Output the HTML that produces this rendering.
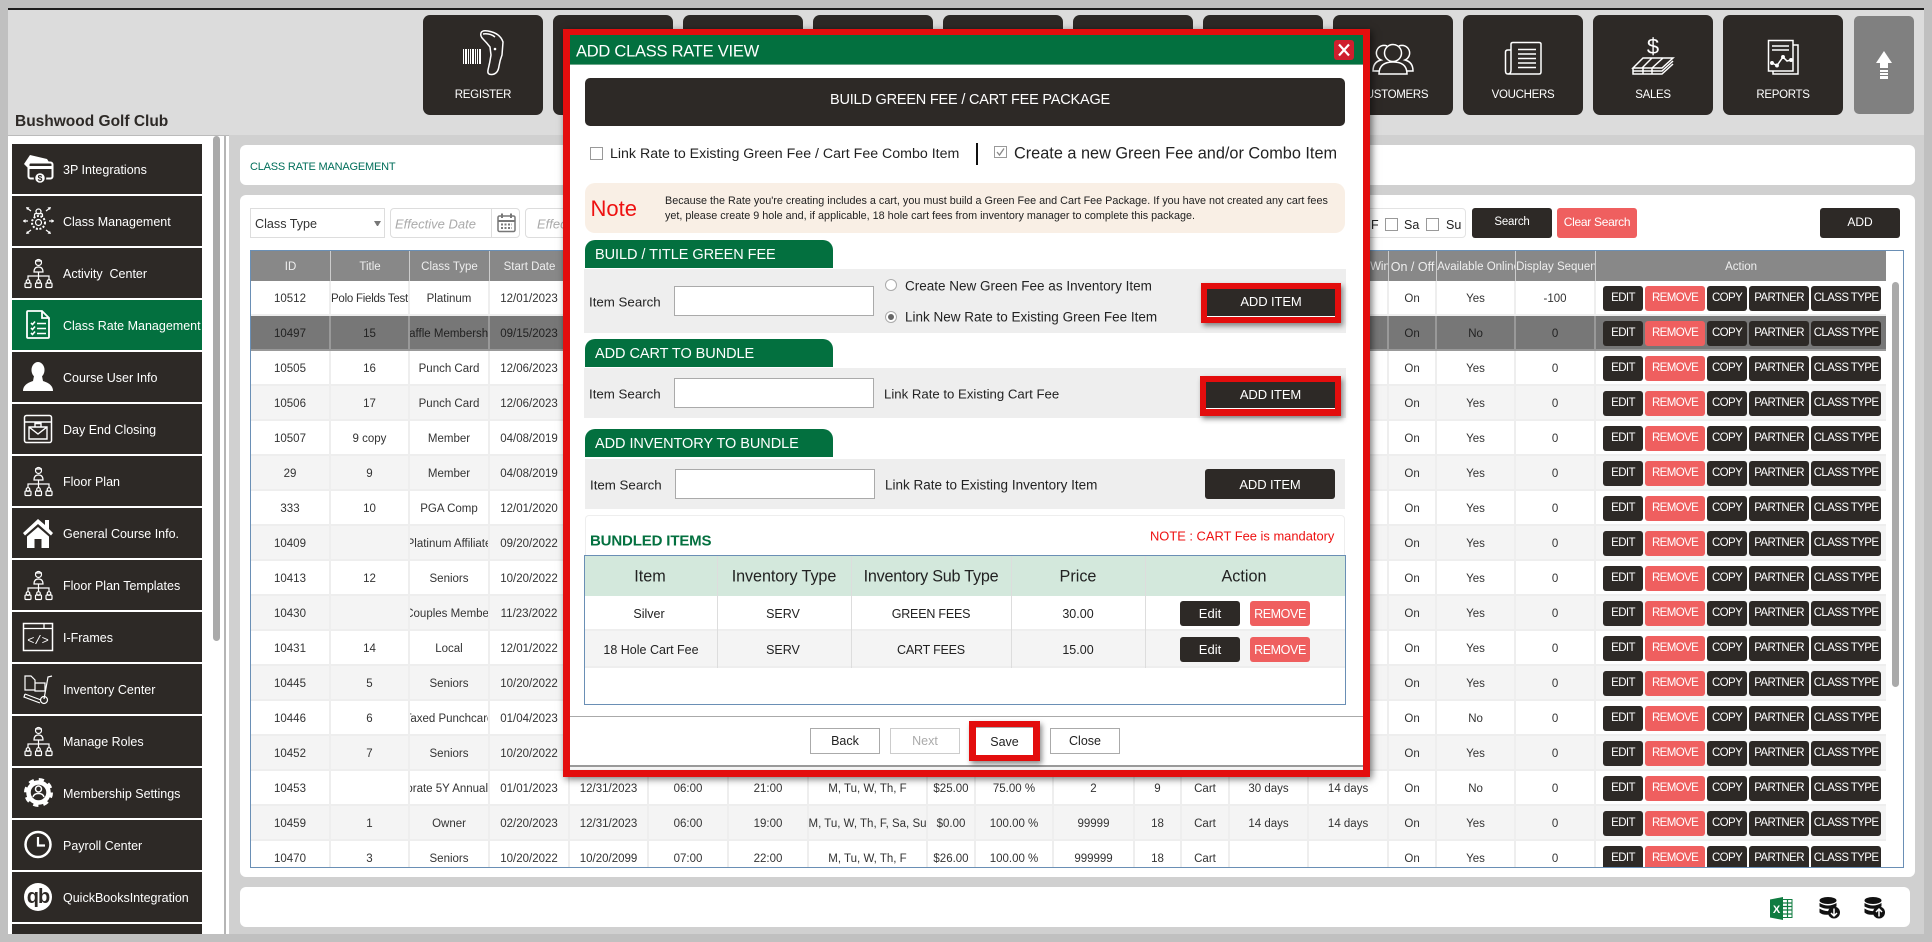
<!DOCTYPE html>
<html><head><meta charset="utf-8"><title>Add Class Rate View</title>
<style>
html,body{margin:0;padding:0}
body{width:1932px;height:942px;position:relative;overflow:hidden;background:#c0c0c0;font-family:"Liberation Sans",sans-serif;color:#222}
.a{position:absolute;box-sizing:border-box}
.t{position:absolute;white-space:nowrap;transform:translateY(-50%)}
.c{position:absolute;white-space:nowrap;transform:translate(-50%,-50%)}
.f{position:absolute;box-sizing:border-box;display:flex;align-items:center;justify-content:center;white-space:nowrap}
.nav{width:120px;height:100px;top:15px;background:#2d2926;border-radius:7px;color:#fff;font-size:11.5px;letter-spacing:-.3px;padding-top:60px}
.sb{left:12px;width:190px;height:50px;background:#2d2926}
.sb span{position:absolute;left:51px;top:51%;transform:translateY(-50%);color:#fff;font-size:12.5px;white-space:nowrap}
.btn{background:#2d2926;color:#fff;border-radius:3px;font-size:12px}
.red{background:#ef5f5f;color:#fff;border-radius:3px}
table{border-collapse:separate;border-spacing:0;table-layout:fixed;width:1635px;font-size:11.5px;color:#333}
th{background:#888;color:#eee;font-weight:normal;height:30px;padding:2px 0 0;border-right:1px solid #ccc;box-sizing:border-box;overflow:hidden;white-space:nowrap;font-size:11.5px}
td{height:35px;padding:2px 0 0;text-align:center;overflow:hidden;white-space:nowrap;border-right:2px solid #eee;border-bottom:2px solid #eee;box-sizing:border-box}
tr:nth-child(even) td{background:#f4f4f4}
tr.h td{background:#777!important;border-color:#999;color:#222}
td.x div{display:flex;justify-content:center;overflow:hidden}
td.x div span{flex:none}
td.e div{justify-content:flex-end}
.ac{display:flex;gap:2px;padding-left:7px}
.ac b{display:block;height:25px;line-height:25px;background:#2d2926;color:#fff;border-radius:3px;font-weight:normal;font-size:11.5px;letter-spacing:-.6px;text-align:center}
.ac b:nth-child(1),.ac b:nth-child(3){width:40px}
.ac b:nth-child(2){width:60px;background:#ef5f5f}
.ac b:nth-child(4){width:60px}
.ac b:nth-child(5){width:70px}
td.l{border-right:0;text-align:left}
.sec{left:585px;width:248px;height:28px;background:#03703f;border-radius:10px 10px 0 0;color:#fff;font-size:14.5px;letter-spacing:-.05px;padding:2px 0 0 10px;display:flex;align-items:center}
.inp{background:#fff;border:1px solid #aaa;height:30px}
.lab{font-size:13.3px;color:#222}
.ft{background:#fff;border:1px solid #aaa;font-size:12.5px;color:#222;height:26px}
.chk{position:absolute;box-sizing:border-box;background:#fff;border:1px solid #999}
</style></head><body>

<div class="a" style="left:8px;top:8px;width:1916px;height:2px;background:#1e1e1e"></div>
<div class="a" style="left:8px;top:10px;width:1916px;height:125px;background:#dcdcdc"></div>
<div class="a" style="left:8px;top:135px;width:1916px;height:799px;background:#d0d0d0"></div>
<div class="a" style="left:8px;top:135px;width:221px;height:799px;background:#fff;border-top:1px solid #bbb"></div>
<div class="a" style="left:224px;top:136px;width:2px;height:798px;background:#b5b5b5"></div>
<div class="a" style="left:213px;top:136px;width:7px;height:505px;background:#aaa;border-radius:4px"></div>

<div class="t" style="left:15px;top:121.5px;font-size:15.5px;font-weight:bold;color:#2d2926">Bushwood Golf Club</div>

<div class="f nav" style="left:423px">REGISTER</div>
<div class="f nav" style="left:553px"></div>
<div class="f nav" style="left:683px"></div>
<div class="f nav" style="left:813px"></div>
<div class="f nav" style="left:943px"></div>
<div class="f nav" style="left:1073px"></div>
<div class="f nav" style="left:1203px"></div>
<div class="f nav" style="left:1333px">CUSTOMERS</div>
<div class="f nav" style="left:1463px">VOUCHERS</div>
<div class="f nav" style="left:1593px">SALES</div>
<div class="f nav" style="left:1723px">REPORTS</div>
<div class="a" style="left:1854px;top:16px;width:60px;height:98px;background:#808080;border-radius:5px"></div>

<!-- sidebar -->
<div class="a sb" style="top:144px"><span>3P Integrations</span></div>
<div class="a sb" style="top:196px"><span>Class Management</span></div>
<div class="a sb" style="top:248px"><span>Activity&nbsp; Center</span></div>
<div class="a sb" style="top:300px;background:#03703f"><span>Class Rate Management</span></div>
<div class="a sb" style="top:352px"><span>Course User Info</span></div>
<div class="a sb" style="top:404px"><span>Day End Closing</span></div>
<div class="a sb" style="top:456px"><span>Floor Plan</span></div>
<div class="a sb" style="top:508px"><span>General Course Info.</span></div>
<div class="a sb" style="top:560px"><span>Floor Plan Templates</span></div>
<div class="a sb" style="top:612px"><span>I-Frames</span></div>
<div class="a sb" style="top:664px"><span>Inventory Center</span></div>
<div class="a sb" style="top:716px"><span>Manage Roles</span></div>
<div class="a sb" style="top:768px"><span>Membership Settings</span></div>
<div class="a sb" style="top:820px"><span>Payroll Center</span></div>
<div class="a sb" style="top:872px"><span>QuickBooksIntegration</span></div>
<div class="a sb" style="top:924px;height:10px"></div>

<!-- cards -->
<div class="a" style="left:240px;top:145px;width:1675px;height:40px;background:#fff;border-radius:6px"></div>
<div class="t" style="left:250px;top:166.5px;font-size:11px;color:#006e5a;letter-spacing:-.2px">CLASS RATE MANAGEMENT</div>
<div class="a" style="left:240px;top:195px;width:1675px;height:682px;background:#fff;border-radius:6px"></div>
<div class="a" style="left:240px;top:887px;width:1670px;height:40px;background:#fff;border-radius:6px"></div>

<!-- filters -->
<div class="a" style="left:250px;top:208px;width:135px;height:30px;border:1px solid #ddd;background:#fff"></div>
<div class="t" style="left:255px;top:223.5px;font-size:12.6px;color:#333">Class Type</div>
<div class="a" style="left:374px;top:221px;border:3.5px solid transparent;border-top:5px solid #777;border-bottom:0;width:7px;height:5px"></div>
<div class="a" style="left:390px;top:208px;width:130px;height:30px;border:1px solid #ddd;border-radius:4px;background:#fff"></div>
<div class="a" style="left:491px;top:208px;width:1px;height:30px;background:#ddd"></div>
<div class="t" style="left:395px;top:223.5px;font-size:13px;font-style:italic;color:#aaa">Effective Date</div>
<div class="a" style="left:525px;top:208px;width:60px;height:30px;border:1px solid #ddd;border-radius:4px;background:#fff"></div>
<div class="t" style="left:537px;top:223.5px;font-size:13px;font-style:italic;color:#aaa">Effec</div>
<div class="a" style="left:1300px;top:208px;width:166px;height:30px;border:1px solid #e3e3e3;border-radius:4px;background:#fff"></div>
<div class="t" style="left:1371px;top:225px;font-size:12.5px">F</div>
<div class="chk" style="left:1385px;top:218px;width:13px;height:13px"></div>
<div class="t" style="left:1404px;top:225px;font-size:12.5px">Sa</div>
<div class="chk" style="left:1426px;top:218px;width:13px;height:13px"></div>
<div class="t" style="left:1446px;top:225px;font-size:12.5px">Su</div>
<div class="f btn" style="left:1472px;top:208px;width:80px;height:30px;padding-bottom:3px;font-size:11.5px;letter-spacing:-.2px">Search</div>
<div class="f red" style="left:1557px;top:208px;width:80px;height:30px;font-size:12px;letter-spacing:-.3px;padding-bottom:3px">Clear Search</div>
<div class="f btn" style="left:1820px;top:208px;width:80px;height:30px;padding-bottom:3px">ADD</div>

<!-- data table -->
<div class="a" style="left:250px;top:250px;width:1654px;height:618px;border:1px solid #6a8fb5;background:#fff;overflow:hidden">
<table>
<colgroup><col style="width:80px"><col style="width:79px"><col style="width:80px"><col style="width:80px"><col style="width:79px"><col style="width:80px"><col style="width:80px"><col style="width:119px"><col style="width:48px"><col style="width:78px"><col style="width:81px"><col style="width:47px"><col style="width:48px"><col style="width:79px"><col style="width:80px"><col style="width:48px"><col style="width:79px"><col style="width:80px"><col style="width:290px"></colgroup>
<thead><tr><th>ID</th><th>Title</th><th>Class Type</th><th>Start Date</th><th colspan="10"></th><th style="text-align:left;padding-left:61px">Win</th><th style="font-size:12.5px">On / Off</th><th style="text-align:left">Available Online</th><th style="text-align:left">Display Sequence</th><th style="border-right:0">Action</th></tr></thead>
<tbody>
<tr><td><span>10512</span></td><td style="letter-spacing:-.25px">Polo Fields Test</td><td>Platinum</td><td>12/01/2023</td><td colspan="10"></td><td>14 days</td><td>On</td><td>Yes</td><td>-100</td><td class="l"><div class="ac"><b>EDIT</b><b>REMOVE</b><b>COPY</b><b>PARTNER</b><b>CLASS TYPE</b></div></td></tr>
<tr class="h"><td>10497</td><td>15</td><td class="x"><div><span>Raffle Membership</span></div></td><td>09/15/2023</td><td colspan="11"></td><td>On</td><td>No</td><td>0</td><td class="l"><div class="ac"><b>EDIT</b><b>REMOVE</b><b>COPY</b><b>PARTNER</b><b>CLASS TYPE</b></div></td></tr>
<tr><td>10505</td><td>16</td><td>Punch Card</td><td>12/06/2023</td><td colspan="11"></td><td>On</td><td>Yes</td><td>0</td><td class="l"><div class="ac"><b>EDIT</b><b>REMOVE</b><b>COPY</b><b>PARTNER</b><b>CLASS TYPE</b></div></td></tr>
<tr><td>10506</td><td>17</td><td>Punch Card</td><td>12/06/2023</td><td colspan="11"></td><td>On</td><td>Yes</td><td>0</td><td class="l"><div class="ac"><b>EDIT</b><b>REMOVE</b><b>COPY</b><b>PARTNER</b><b>CLASS TYPE</b></div></td></tr>
<tr><td>10507</td><td>9 copy</td><td>Member</td><td>04/08/2019</td><td colspan="11"></td><td>On</td><td>Yes</td><td>0</td><td class="l"><div class="ac"><b>EDIT</b><b>REMOVE</b><b>COPY</b><b>PARTNER</b><b>CLASS TYPE</b></div></td></tr>
<tr><td>29</td><td>9</td><td>Member</td><td>04/08/2019</td><td colspan="11"></td><td>On</td><td>Yes</td><td>0</td><td class="l"><div class="ac"><b>EDIT</b><b>REMOVE</b><b>COPY</b><b>PARTNER</b><b>CLASS TYPE</b></div></td></tr>
<tr><td>333</td><td>10</td><td>PGA Comp</td><td>12/01/2020</td><td colspan="11"></td><td>On</td><td>Yes</td><td>0</td><td class="l"><div class="ac"><b>EDIT</b><b>REMOVE</b><b>COPY</b><b>PARTNER</b><b>CLASS TYPE</b></div></td></tr>
<tr><td>10409</td><td></td><td class="x"><div><span>Platinum Affiliate</span></div></td><td>09/20/2022</td><td colspan="11"></td><td>On</td><td>Yes</td><td>0</td><td class="l"><div class="ac"><b>EDIT</b><b>REMOVE</b><b>COPY</b><b>PARTNER</b><b>CLASS TYPE</b></div></td></tr>
<tr><td>10413</td><td>12</td><td>Seniors</td><td>10/20/2022</td><td colspan="11"></td><td>On</td><td>Yes</td><td>0</td><td class="l"><div class="ac"><b>EDIT</b><b>REMOVE</b><b>COPY</b><b>PARTNER</b><b>CLASS TYPE</b></div></td></tr>
<tr><td>10430</td><td></td><td class="x"><div><span>Couples Member</span></div></td><td>11/23/2022</td><td colspan="11"></td><td>On</td><td>Yes</td><td>0</td><td class="l"><div class="ac"><b>EDIT</b><b>REMOVE</b><b>COPY</b><b>PARTNER</b><b>CLASS TYPE</b></div></td></tr>
<tr><td>10431</td><td>14</td><td>Local</td><td>12/01/2022</td><td colspan="11"></td><td>On</td><td>Yes</td><td>0</td><td class="l"><div class="ac"><b>EDIT</b><b>REMOVE</b><b>COPY</b><b>PARTNER</b><b>CLASS TYPE</b></div></td></tr>
<tr><td>10445</td><td>5</td><td>Seniors</td><td>10/20/2022</td><td colspan="11"></td><td>On</td><td>Yes</td><td>0</td><td class="l"><div class="ac"><b>EDIT</b><b>REMOVE</b><b>COPY</b><b>PARTNER</b><b>CLASS TYPE</b></div></td></tr>
<tr><td>10446</td><td>6</td><td class="x"><div><span>Taxed Punchcard</span></div></td><td>01/04/2023</td><td colspan="11"></td><td>On</td><td>No</td><td>0</td><td class="l"><div class="ac"><b>EDIT</b><b>REMOVE</b><b>COPY</b><b>PARTNER</b><b>CLASS TYPE</b></div></td></tr>
<tr><td>10452</td><td>7</td><td>Seniors</td><td>10/20/2022</td><td colspan="11"></td><td>On</td><td>Yes</td><td>0</td><td class="l"><div class="ac"><b>EDIT</b><b>REMOVE</b><b>COPY</b><b>PARTNER</b><b>CLASS TYPE</b></div></td></tr>
<tr><td>10453</td><td></td><td class="x e"><div><span>Corporate 5Y Annual</span></div></td><td>01/01/2023</td><td>12/31/2023</td><td>06:00</td><td>21:00</td><td>M, Tu, W, Th, F</td><td>$25.00</td><td>75.00 %</td><td>2</td><td>9</td><td>Cart</td><td>30 days</td><td>14 days</td><td>On</td><td>No</td><td>0</td><td class="l"><div class="ac"><b>EDIT</b><b>REMOVE</b><b>COPY</b><b>PARTNER</b><b>CLASS TYPE</b></div></td></tr>
<tr><td>10459</td><td>1</td><td>Owner</td><td>02/20/2023</td><td>12/31/2023</td><td>06:00</td><td>19:00</td><td class="x"><div><span>M, Tu, W, Th, F, Sa, Su</span></div></td><td>$0.00</td><td>100.00 %</td><td>99999</td><td>18</td><td>Cart</td><td>14 days</td><td>14 days</td><td>On</td><td>Yes</td><td>0</td><td class="l"><div class="ac"><b>EDIT</b><b>REMOVE</b><b>COPY</b><b>PARTNER</b><b>CLASS TYPE</b></div></td></tr>
<tr><td>10470</td><td>3</td><td>Seniors</td><td>10/20/2022</td><td>10/20/2099</td><td>07:00</td><td>22:00</td><td>M, Tu, W, Th, F</td><td>$26.00</td><td>100.00 %</td><td>999999</td><td>18</td><td>Cart</td><td></td><td></td><td>On</td><td>Yes</td><td>0</td><td class="l"><div class="ac"><b>EDIT</b><b>REMOVE</b><b>COPY</b><b>PARTNER</b><b>CLASS TYPE</b></div></td></tr>
</tbody></table>
</div>
<div class="a" style="left:1892px;top:282px;width:7px;height:405px;background:#aaa;border-radius:4px"></div>

<!-- icon layer -->
<svg class="a" style="left:0;top:0" width="1932" height="942" viewBox="0 0 1932 942" fill="none" stroke="#fff" stroke-width="1.5">
<defs>
<g id="org" stroke-width="1.2">
<circle cx="19.5" cy="9.5" r="3"/><path d="M16 8h7M15 19q0-5 4.500-5t4.500 5zM19.500 19v8M9 27v-4h21v4"/>
<circle cx="9" cy="28.500" r="1.800"/><rect x="6" y="30" width="6" height="4.500" rx="1"/>
<circle cx="19.500" cy="28.500" r="1.800"/><rect x="16.500" y="30" width="6" height="4.500" rx="1"/>
<circle cx="30" cy="28.500" r="1.800"/><rect x="27" y="30" width="6" height="4.500" rx="1"/>
</g>
</defs>
<!-- scanner -->
<path d="M463 56.500H481" stroke-width="15" stroke-dasharray="1 1 2 1 1 1 1 1 2 1 1 1 1 1 2 2"/>
<path d="M481 33Q482 30 488 31Q500 33 503 42L502 55Q500 60 499 66Q498 74 492 74.500Q487 75 488 70Q490 62 491 55L490 47Q487 43 483 39Q480 36 481 33ZM483 34Q490 33 495 37"/>
<circle cx="495" cy="49" r="1.300" fill="#fff" stroke="none"/>
<!-- customers -->
<circle cx="1393" cy="53" r="8.500"/><path d="M1379 74Q1379 62 1393 62Q1407 62 1407 74Z"/><path d="M1387 46A7.500 7.500 0 1 0 1381 60Q1373 62 1373 71H1379M1399 46A7.500 7.500 0 1 1 1405 60Q1413 62 1413 71H1407"/>
<!-- vouchers -->
<path d="M1511 70V44Q1511 42.500 1513 42.500H1539Q1541 42.500 1541 44V72Q1541 74 1539 74H1508Q1505.500 74 1505.500 71V52Q1505.500 50 1508 50H1511M1508 74Q1511 74 1511 70"/>
<path d="M1518 49.500H1536M1518 54H1536M1518 58.500H1536M1518 63H1536M1518 67.500H1536"/>
<!-- sales -->
<text x="1653" y="54" font-size="22" fill="#fff" stroke="none" text-anchor="middle" font-family="Liberation Sans">$</text>
<path d="M1643 58H1673L1662 68H1633ZM1652 58L1642 68M1663 58L1652 68M1633 68V74H1662L1673 64M1633 71H1662L1673 61M1643 68V74M1652 68V74M1662 68L1673 58"/>
<!-- reports -->
<path d="M1768.500 40.500H1793V71H1768.500ZM1793 45H1798V74H1773V71M1772 46H1789M1772 50H1789"/>
<path d="M1772 63L1777 65.500L1783 57L1787 61L1791 60"/>
<circle cx="1772" cy="63" r="1.200" fill="#fff"/><circle cx="1777" cy="65.500" r="1.200" fill="#fff"/><circle cx="1783" cy="57" r="1.200" fill="#fff"/><circle cx="1791" cy="60" r="1.200" fill="#fff"/>
<!-- up arrow -->
<path d="M1884 51L1892 63H1888V68H1880V63H1876Z" fill="#fff" stroke="none"/>
<path d="M1880 70H1888V72H1880ZM1880 73H1888V75H1880ZM1880 76H1888V79H1880Z" fill="#fff" stroke="none"/>

<!-- calendar -->
<g stroke="#777"><rect x="498" y="216" width="17" height="15.500" rx="1.500" stroke-width="1.500"/><path d="M498 221H515" stroke-width="2"/><path d="M502 213.500V218M511 213.500V218" stroke-width="2"/><path d="M501 224.500H512M501 228H512" stroke-width="2" stroke-dasharray="2 1.500"/></g>

<!-- 3P -->
<g transform="translate(19,149)">
<path d="M5 15L11 6L28 10L30 13H10V20Z" fill="#fff" stroke="none"/>
<rect x="9.500" y="13.500" width="24" height="16" rx="2" stroke-width="2"/><path d="M9.500 18.500H33.500" stroke-width="3"/>
<circle cx="21" cy="29" r="5.500" fill="#fff" stroke="#2d2926"/><text x="21" y="32" font-size="8.500" font-weight="bold" fill="#2d2926" stroke="none" text-anchor="middle" font-family="Liberation Sans">$</text>
</g>
<!-- class mgmt -->
<g transform="translate(19,201)" stroke-width="1.200">
<circle cx="19.500" cy="10.500" r="2.500"/><path d="M15.500 16v-2q0-1.500 1.500-1.500h5q1.500 0 1.500 1.500v2"/>
<circle cx="19.500" cy="21.500" r="3"/><circle cx="19.500" cy="21.500" r="6.500" stroke-width="2" stroke-dasharray="2 1.600"/>
<path d="M4 20H9M30 20H35M8 7L12 10M31 7L27 10M8 32L12 29M31 32L27 29"/>
<path d="M4 20l2.500-2v4zM35 20l-2.500-2v4zM7 6l3.500.5-2.500 2.500zM32 6l-3.500.5 2.500 2.500zM7 33l3.500-.5-2.500-2.500zM32 33l-3.500-.5 2.500-2.500z" fill="#fff" stroke="none"/>
</g>
<use href="#org" transform="translate(19,253)"/>
<!-- class rate -->
<g transform="translate(19,305)">
<path d="M9 6H23L30 13V32Q30 33 29 33H9Q8 33 8 32V7Q8 6 9 6ZM23 6V13H30" stroke-width="1.800"/>
<path d="M12 18l1.500 1.500 2.500-3M12 23l1.500 1.500 2.500-3M12 28l1.500 1.500 2.500-3M18 18.500H27M18 23.500H27M18 28.500H27" stroke-width="1.600"/>
</g>
<!-- user -->
<g transform="translate(19,357)" fill="#fff" stroke="none">
<ellipse cx="19" cy="13" rx="6.500" ry="8"/><path d="M15 19H23L24 24Q34 27 34 34H4Q4 27 14 24Z"/>
</g>
<!-- day end -->
<g transform="translate(19,409)">
<rect x="5.500" y="6.500" width="27" height="27" rx="2"/><path d="M5.500 13H32.500M10 18H28V30H10ZM16 18V14.500H22V18M10 18L19 25L28 18" stroke-width="1.400"/>
</g>
<use href="#org" transform="translate(19,461)"/>
<!-- house -->
<g transform="translate(19,513)" fill="#fff" stroke="none">
<path d="M19 6L26 12V7H30V16L34 20L32 22.500L19 11L6 22.500L4 20Z"/><path d="M19 14L30 23.500V35H22.500V26H15.500V35H8V23.500Z"/>
</g>
<use href="#org" transform="translate(19,565)"/>
<!-- iframes -->
<g transform="translate(19,617)">
<rect x="4.500" y="6.500" width="29" height="27"/><path d="M4.500 11.500H33.500M25 6.500V11.500" stroke-width="1.300"/>
<text x="19" y="27" font-size="12" fill="#fff" stroke="none" text-anchor="middle" font-family="Liberation Mono">&lt;/&gt;</text>
</g>
<!-- inventory -->
<g transform="translate(19,669)" stroke-width="1.200">
<path d="M6 7H12L16 11V21H6ZM16 14H26V22H16ZM33 7L29 8L25 30M6 25L22 31M6 25L5 28L21 34"/>
<circle cx="25" cy="31" r="3.500"/>
</g>
<use href="#org" transform="translate(19,721)"/>
<!-- gear -->
<g transform="translate(19,773)">
<circle cx="19.500" cy="19.500" r="10" stroke-width="4.500"/><circle cx="19.500" cy="19.500" r="12.500" stroke-width="4" stroke-dasharray="5 4.800"/>
<circle cx="19.500" cy="16" r="3" stroke-width="1.500"/><path d="M14 24Q15 20.500 19.500 20.500T25 24" stroke-width="1.500"/>
</g>
<!-- clock -->
<g transform="translate(19,825)"><circle cx="19" cy="19.500" r="12.500" stroke-width="2.500"/><path d="M19 12V20.500H26" stroke-width="2.200"/></g>
<!-- QB -->
<g transform="translate(19,877)"><circle cx="19" cy="20" r="14" fill="#fff" stroke="none"/><text x="19" y="26" font-size="20" font-weight="bold" fill="#2d2926" stroke="none" text-anchor="middle" font-family="Liberation Sans" letter-spacing="-1">qb</text></g>

<!-- bottom icons -->
<path d="M1783 897L1770 899.500V917.500L1783 920Z" fill="#107c41" stroke="none"/>
<path d="M1783 899.500H1792V917.500H1783" stroke="#107c41" fill="#fff" stroke-width="1"/>
<path d="M1783 903H1792M1783 906.500H1792M1783 910H1792M1783 914H1792M1787.500 899.500V917.500" stroke="#107c41" stroke-width="1.200"/>
<text x="1776.500" y="913" font-size="11" font-weight="bold" fill="#fff" stroke="none" text-anchor="middle" font-family="Liberation Sans">X</text>
<g stroke="none" fill="#111">
<ellipse cx="1828" cy="900.500" rx="8.500" ry="3.500"/><path d="M1819.500 903Q1828 908 1836.500 903V906.500Q1828 911 1819.500 906.500ZM1819.500 908.500Q1824 911.500 1829 911V914.500Q1823 915.500 1819.500 912.500Z"/>
<circle cx="1834" cy="912.500" r="6"/>
<ellipse cx="1873" cy="900.500" rx="8.500" ry="3.500"/><path d="M1864.500 903Q1873 908 1881.500 903V906.500Q1873 911 1864.500 906.500ZM1864.500 908.500Q1869 911.500 1874 911V914.500Q1868 915.500 1864.500 912.500Z"/>
<circle cx="1879" cy="912.500" r="6"/>
</g>
<path d="M1834 908.500V916M1831 913L1834 916L1837 913M1879 916.500V909M1876 912L1879 909L1882 912" stroke-width="1.500"/>
</svg>

<!-- modal -->
<div class="a" style="left:563px;top:29px;width:807px;height:748px;border:7px solid #e30d0d;box-shadow:2px 2px 7px rgba(0,0,0,.55)"></div>
<div class="a" style="left:570px;top:35px;width:793px;height:732px;background:#fff;border-bottom:2px solid #999"></div>
<div class="a" style="left:570px;top:35px;width:793px;height:30px;background:#03703f;border-bottom:1px solid #6aa588"></div>
<div class="t" style="left:576px;top:52px;font-size:16.5px;color:#fff;letter-spacing:-.25px">ADD CLASS RATE VIEW</div>
<div class="a" style="left:1334px;top:40px;width:20px;height:20px;background:#cf1f2e;border-radius:3px"></div>
<svg class="a" style="left:1334px;top:40px" width="20" height="20" fill="none" stroke="#fff" stroke-width="2.200"><path d="M5 4.500L15 15.500M15 4.500L5 15.500"/></svg>

<div class="f" style="left:585px;top:78px;width:760px;height:48px;background:#2d2926;border-radius:5px;color:#fff;font-size:14.5px;letter-spacing:-.2px;padding:0 0 4px 10px">BUILD GREEN FEE / CART FEE PACKAGE</div>

<div class="chk" style="left:590px;top:147px;width:13px;height:13px"></div>
<div class="t" style="left:610px;top:153.5px;font-size:14.2px;color:#222">Link Rate to Existing Green Fee / Cart Fee Combo Item</div>
<div class="a" style="left:976px;top:143px;width:2px;height:22px;background:#111"></div>
<div class="chk" style="left:994px;top:146px;width:13px;height:12px"></div>
<svg class="a" style="left:994px;top:146px" width="13" height="12" fill="none" stroke="#888" stroke-width="1.300"><path d="M3 6L5.500 9L10 2.500"/></svg>
<div class="t" style="left:1014px;top:154px;font-size:16.3px;color:#222">Create a new Green Fee and/or Combo Item</div>

<div class="a" style="left:585px;top:183px;width:760px;height:50px;background:#f9efe5;border-radius:10px"></div>
<div class="t" style="left:590.5px;top:209px;font-size:22px;color:#ee1111">Note</div>
<div class="t" style="left:665px;top:201px;font-size:10.8px;color:#222">Because the Rate you're creating includes a cart, you must build a Green Fee and Cart Fee Package. If you have not created any cart fees</div>
<div class="t" style="left:665px;top:216px;font-size:10.8px;color:#222">yet, please create 9 hole and, if applicable, 18 hole cart fees from inventory manager to complete this package.</div>

<!-- section 1 -->
<div class="a sec" style="top:240px">BUILD / TITLE GREEN FEE</div>
<div class="a" style="left:584px;top:269px;width:762px;height:64px;background:#eee"></div>
<div class="t lab" style="left:589px;top:302px">Item Search</div>
<div class="a inp" style="left:674px;top:286px;width:200px"></div>
<div class="a" style="left:885px;top:279px;width:12px;height:12px;border:1px solid #aaa;border-radius:50%;background:#fff"></div>
<div class="t lab" style="left:905px;top:285.5px;font-size:13.5px">Create New Green Fee as Inventory Item</div>
<div class="a" style="left:885px;top:311px;width:12px;height:12px;border:1px solid #aaa;border-radius:50%;background:#fff"></div>
<div class="a" style="left:888px;top:314px;width:6px;height:6px;border-radius:50%;background:#666"></div>
<div class="t lab" style="left:905px;top:317px;font-size:13.5px">Link New Rate to Existing Green Fee Item</div>
<div class="a" style="left:1201px;top:283px;width:140px;height:40px;background:#e30d0d;box-shadow:2px 3px 5px rgba(0,0,0,.45)"></div>
<div class="f" style="left:1207px;top:289px;width:128px;height:28px;background:#2d2926;border-bottom:1px solid #fff;color:#fff;font-size:13px;letter-spacing:-.1px;padding-bottom:2px">ADD ITEM</div>

<!-- section 2 -->
<div class="a sec" style="top:339px">ADD CART TO BUNDLE</div>
<div class="a" style="left:584px;top:368px;width:762px;height:50px;background:#eee"></div>
<div class="t lab" style="left:589px;top:394px">Item Search</div>
<div class="a inp" style="left:674px;top:378px;width:200px"></div>
<div class="t lab" style="left:884px;top:394px;font-size:13.2px">Link Rate to Existing Cart Fee</div>
<div class="a" style="left:1200px;top:376px;width:141px;height:40px;background:#e30d0d;box-shadow:2px 3px 5px rgba(0,0,0,.45)"></div>
<div class="f" style="left:1206px;top:382px;width:129px;height:27px;background:#2d2926;border-bottom:1px solid #fff;color:#fff;font-size:13px;letter-spacing:-.1px;padding-bottom:2px">ADD ITEM</div>

<!-- section 3 -->
<div class="a sec" style="top:429px">ADD INVENTORY TO BUNDLE</div>
<div class="a" style="left:585px;top:459px;width:760px;height:50px;background:#eee"></div>
<div class="t lab" style="left:590px;top:485px">Item Search</div>
<div class="a inp" style="left:675px;top:469px;width:200px"></div>
<div class="t lab" style="left:885px;top:485px;font-size:13.5px">Link Rate to Existing Inventory Item</div>
<div class="f btn" style="left:1205px;top:469px;width:130px;height:30px;font-size:13px;letter-spacing:-.1px">ADD ITEM</div>

<!-- bundled -->
<div class="a" style="left:585px;top:515px;width:760px;height:40px;border:1px solid #eee;border-bottom:0;border-radius:4px 4px 0 0"></div>
<div class="t" style="left:590px;top:540.5px;font-size:15px;font-weight:bold;color:#03703f;letter-spacing:-.15px">BUNDLED ITEMS</div>
<div class="t" style="left:1150px;top:536px;font-size:12.9px;color:#ee1111">NOTE : CART Fee is mandatory</div>

<div class="a" style="left:584px;top:555px;width:762px;height:150px;border:1px solid #6a8fb5;background:#fff"></div>
<div class="a" style="left:585px;top:556px;width:760px;height:40px;background:#d3e8dc"></div>
<div class="a" style="left:585px;top:596px;width:760px;height:35px;background:#fff;border-bottom:2px solid #eee"></div>
<div class="a" style="left:585px;top:631px;width:760px;height:37px;background:#f4f4f4;border-bottom:2px solid #eee"></div>
<div class="a" style="left:717px;top:556px;width:1px;height:112px;background:#ddd"></div>
<div class="a" style="left:851px;top:556px;width:1px;height:112px;background:#ddd"></div>
<div class="a" style="left:1011px;top:556px;width:1px;height:112px;background:#ddd"></div>
<div class="a" style="left:1145px;top:556px;width:1px;height:112px;background:#ddd"></div>
<div class="c" style="left:650px;top:577px;font-size:16.2px">Item</div>
<div class="c" style="left:784px;top:577px;font-size:16.2px;letter-spacing:-.1px">Inventory Type</div>
<div class="c" style="left:931px;top:577px;font-size:16.2px;letter-spacing:-.25px">Inventory Sub Type</div>
<div class="c" style="left:1078px;top:577px;font-size:16.2px">Price</div>
<div class="c" style="left:1244px;top:577px;font-size:16.2px">Action</div>
<div class="c" style="left:649px;top:614px;font-size:12.5px">Silver</div>
<div class="c" style="left:783px;top:614px;font-size:12.5px">SERV</div>
<div class="c" style="left:931px;top:614px;font-size:12.5px;letter-spacing:-.2px">GREEN FEES</div>
<div class="c" style="left:1078px;top:614px;font-size:12.5px">30.00</div>
<div class="f btn" style="left:1180px;top:601px;width:60px;height:25px;font-size:13px">Edit</div>
<div class="f red" style="left:1250px;top:601px;width:60px;height:25px;font-size:12.5px;letter-spacing:-.4px">REMOVE</div>
<div class="c" style="left:651px;top:650px;font-size:12.5px">18 Hole Cart Fee</div>
<div class="c" style="left:783px;top:650px;font-size:12.5px">SERV</div>
<div class="c" style="left:931px;top:650px;font-size:12.5px;letter-spacing:-.2px">CART FEES</div>
<div class="c" style="left:1078px;top:650px;font-size:12.5px">15.00</div>
<div class="f btn" style="left:1180px;top:637px;width:60px;height:25px;font-size:13px">Edit</div>
<div class="f red" style="left:1250px;top:637px;width:60px;height:25px;font-size:12.5px;letter-spacing:-.4px">REMOVE</div>

<!-- footer -->
<div class="a" style="left:570px;top:716px;width:793px;height:1px;background:#aaa"></div>
<div class="f ft" style="left:810px;top:728px;width:70px">Back</div>
<div class="f ft" style="left:890px;top:728px;width:70px;color:#aaa;border-color:#ccc">Next</div>
<div class="a" style="left:969px;top:721px;width:71px;height:40px;background:#e30d0d;box-shadow:2px 3px 5px rgba(0,0,0,.45)"></div>
<div class="f" style="left:976px;top:727px;width:57px;height:28px;background:#fff;font-size:12.5px;color:#222;border-top:1px solid #aaa">Save</div>
<div class="f ft" style="left:1050px;top:728px;width:70px">Close</div>

</body></html>
